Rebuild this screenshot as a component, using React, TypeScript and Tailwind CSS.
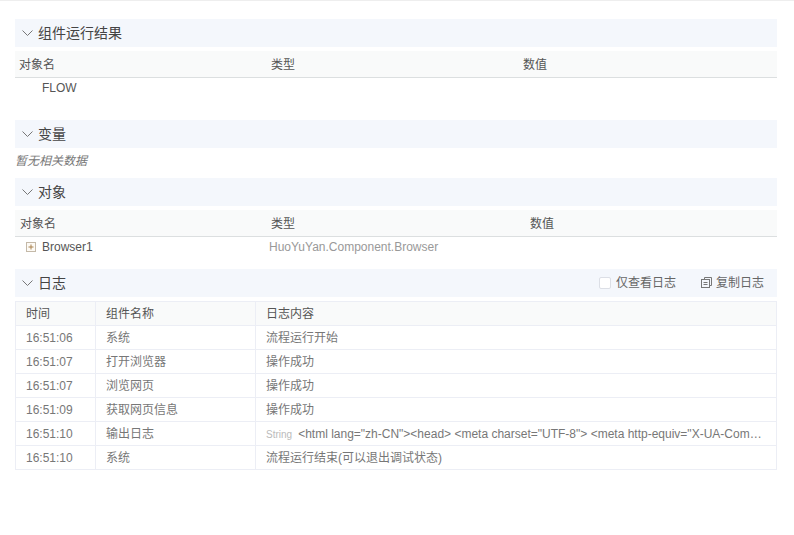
import React from 'react';

const font = '[font-family:"Liberation_Sans","Noto_Sans_CJK_SC",sans-serif]';

const logs = [
  { time: '16:51:06', name: '系统', text: '流程运行开始' },
  { time: '16:51:07', name: '打开浏览器', text: '操作成功' },
  { time: '16:51:07', name: '浏览网页', text: '操作成功' },
  { time: '16:51:09', name: '获取网页信息', text: '操作成功' },
  {
    time: '16:51:10',
    name: '输出日志',
    tag: 'String',
    text: '<html lang="zh-CN"><head> <meta charset="UTF-8"> <meta http-equiv="X-UA-Compatible" content="IE=edge"> <meta name="viewport">',
  },
  { time: '16:51:10', name: '系统', text: '流程运行结束(可以退出调试状态)' },
];

const SectionHeader: React.FC<{ title: string; children?: React.ReactNode }> = ({ title, children }) => (
  <div className="flex h-7 items-center bg-[#f4f7fc] pl-[7px] pr-[13px]">
    <svg width="11" height="6" viewBox="0 0 11 6" fill="none" stroke="#777" className="mt-[-1px]">
      <path d="M.5.5 5.5 5.5 10.5.5" />
    </svg>
    <span className="ml-[5px] text-[14px] text-[#444]">{title}</span>
    {children && <div className="ml-auto flex items-center">{children}</div>}
  </div>
);

const HeadRow: React.FC<{ cols: string[]; widths: string[]; pad: string }> = ({ cols, widths, pad }) => (
  <div className={`mt-1 flex h-[27px] items-center border-b border-b-[#dcdfe0] bg-[#f9fafa] pt-[2px] text-[#555] ${pad}`}>
    {cols.map((c, i) => (
      <div key={c} className={widths[i]}>{c}</div>
    ))}
  </div>
);

const App: React.FC = () => {
  return (
    <div className={`h-[535px] w-[794px] overflow-hidden border-t border-t-[#eeeeee] bg-white px-[15px] pr-[17px] pt-[18px] text-[12px] ${font}`}>
      <SectionHeader title="组件运行结果" />
      <HeadRow cols={['对象名', '类型', '数值']} widths={['w-[252px]', 'w-[252px]', 'w-[252px]']} pad="pl-[4px]" />
      <div className="flex h-[20px] items-center pl-[27px] text-[#555]">FLOW</div>

      <div className="mt-[22px]">
        <SectionHeader title="变量" />
      </div>
      <div className="flex h-[30px] items-center pb-[4px] text-[#777] italic">暂无相关数据</div>

      <SectionHeader title="对象" />
      <HeadRow cols={['对象名', '类型', '数值']} widths={['w-[251px]', 'w-[259px]', 'w-[240px]']} pad="pl-[5px]" />
      <div className="flex h-[20px] items-center pl-[11px]">
        <div className="flex w-[243px] items-center text-[#555]">
          <svg width="10" height="10" viewBox="0 0 10 10" className="mr-[6px]">
            <rect x="0.5" y="0.5" width="9" height="9" fill="#fdfaf5" stroke="#c4b9a8" />
            <path d="M2.5 5H7.5M5 2.5V7.5" stroke="#a8814e" fill="none" />
          </svg>
          Browser1
        </div>
        <div className="text-[#999]">HuoYuYan.Component.Browser</div>
      </div>

      <div className="mt-[12px]">
        <SectionHeader title="日志">
          <span className="mr-[5px] h-3 w-3 rounded-[2px] border border-[#dcdfe6] bg-white" />
          <span className="text-[#666]">仅查看日志</span>
          <svg width="11" height="11" viewBox="0 0 11 11" className="ml-[25px] mr-[4px] mt-[-1px]" fill="none" stroke="#777">
            <path d="M3.5 2.5V.5H10.5V8.5H8.5" />
            <rect x="0.5" y="2.5" width="8" height="8" />
            <path d="M2.5 5.5H6.5M2.5 7.5H6.5" />
          </svg>
          <span className="text-[#666]">复制日志</span>
        </SectionHeader>
      </div>

      <div className="mt-1 border border-b-0 border-[#eceef5]">
        <div className="flex h-6 border-b border-b-[#eceef5] bg-[#f9fafa] text-[#555]">
          <div className="flex w-[80px] items-center border-r border-r-[#eceef5] pl-[10px]">时间</div>
          <div className="flex w-[160px] items-center border-r border-r-[#eceef5] pl-[10px]">组件名称</div>
          <div className="flex flex-1 items-center pl-[10px]">日志内容</div>
        </div>
        {logs.map((row, i) => (
          <div key={i} className="flex h-6 border-b border-b-[#eceef5] text-[#777]">
            <div className="flex w-[80px] items-center border-r border-r-[#eceef5] pl-[10px]">{row.time}</div>
            <div className="flex w-[160px] items-center border-r border-r-[#eceef5] pl-[10px]">{row.name}</div>
            <div className="flex min-w-0 flex-1 items-center pl-[10px] pr-[12px]">
              <div className="truncate">
                {row.tag && <span className="mr-[6px] text-[10px] text-[#bbb]">{row.tag}</span>}
                {row.text}
              </div>
            </div>
          </div>
        ))}
      </div>
    </div>
  );
};

export default App;
